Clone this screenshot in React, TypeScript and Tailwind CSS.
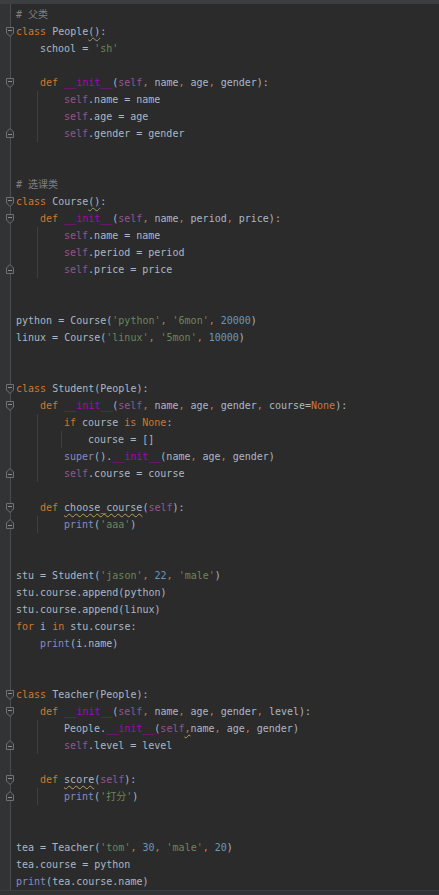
import React from "react";

const LINES: string[] = [
  "# 父类",
  "class People():",
  "    school = 'sh'",
  "",
  "    def __init__(self, name, age, gender):",
  "        self.name = name",
  "        self.age = age",
  "        self.gender = gender",
  "",
  "",
  "# 选课类",
  "class Course():",
  "    def __init__(self, name, period, price):",
  "        self.name = name",
  "        self.period = period",
  "        self.price = price",
  "",
  "",
  "python = Course('python', '6mon', 20000)",
  "linux = Course('linux', '5mon', 10000)",
  "",
  "",
  "class Student(People):",
  "    def __init__(self, name, age, gender, course=None):",
  "        if course is None:",
  "            course = []",
  "        super().__init__(name, age, gender)",
  "        self.course = course",
  "",
  "    def choose_course(self):",
  "        print('aaa')",
  "",
  "",
  "stu = Student('jason', 22, 'male')",
  "stu.course.append(python)",
  "stu.course.append(linux)",
  "for i in stu.course:",
  "    print(i.name)",
  "",
  "",
  "class Teacher(People):",
  "    def __init__(self, name, age, gender, level):",
  "        People.__init__(self,name, age, gender)",
  "        self.level = level",
  "",
  "    def score(self):",
  "        print('打分')",
  "",
  "",
  "tea = Teacher('tom', 30, 'male', 20)",
  "tea.course = python",
  "print(tea.course.name)",
];

// 1-based line numbers
const FOLD_START = new Set([2, 5, 12, 13, 23, 24, 30, 41, 42, 46]);
const FOLD_END = new Set([8, 16, 28, 31, 44, 47]);
const GUIDES: Record<number, number[]> = {
  6: [0], 7: [0], 8: [0],
  14: [0], 15: [0], 16: [0],
  25: [0], 26: [0, 1], 27: [0], 28: [0],
  31: [0],
  43: [0], 44: [0],
  47: [0],
};
// wavy decorations: line -> [from, to, color] (column indices within the trimmed text)
const WAVY: Record<number, [number, number, string][]> = {
  2: [[12, 14, "#9a9a7a"]],
  12: [[12, 14, "#9a9a7a"]],
  30: [[4, 17, "#b9a35a"]],
  43: [[20, 21, "#b9a35a"]],
  46: [[4, 9, "#b9a35a"]],
};

const C = {
  def: "#a9b7c6",
  kw: "#cc7832",
  str: "#6a8759",
  num: "#6897bb",
  self: "#94558d",
  magic: "#b200b2",
  builtin: "#8888c6",
  comment: "#808080",
};
const KW = new Set(["class", "def", "if", "is", "None", "for", "in"]);

function colorize(text: string): string[] {
  const colors: string[] = new Array(text.length).fill(C.def);
  const re = /(#.*$)|('[^']*')|(\b\d+\b)|([A-Za-z_][A-Za-z0-9_]*)|(,)/g;
  let m: RegExpExecArray | null;
  while ((m = re.exec(text))) {
    let col = C.def;
    if (m[1]) col = C.comment;
    else if (m[2]) col = C.str;
    else if (m[3]) col = C.num;
    else if (m[4]) {
      const w = m[4];
      if (KW.has(w)) col = C.kw;
      else if (w === "self") col = C.self;
      else if (w === "__init__") col = C.magic;
      else if (w === "print" || w === "super") col = C.builtin;
    } else if (m[5]) col = C.kw;
    for (let i = m.index; i < m.index + m[0].length; i++) colors[i] = col;
  }
  return colors;
}

function renderText(text: string, lineNo: number) {
  const colors = colorize(text);
  const wavy: (string | null)[] = new Array(text.length).fill(null);
  (WAVY[lineNo] || []).forEach(([a, b, c]) => {
    for (let i = a; i < b && i < text.length; i++) wavy[i] = c;
  });
  const chars = Array.from(text);
  const out: React.ReactNode[] = [];
  let i = 0;
  let k = 0;
  while (i < chars.length) {
    let j = i + 1;
    while (j < chars.length && colors[j] === colors[i] && wavy[j] === wavy[i]) j++;
    const seg = chars.slice(i, j).join("");
    const w = wavy[i];
    out.push(
      <span
        key={k++}
        style={{
          color: colors[i],
          ...(w
            ? {
                textDecorationLine: "underline",
                textDecorationStyle: "wavy",
                textDecorationColor: w,
                textDecorationThickness: "1px",
                textUnderlineOffset: "2px",
              }
            : {}),
        }}
      >
        {seg}
      </span>
    );
    i = j;
  }
  return out;
}

function FoldStart() {
  return (
    <svg width="8" height="10" viewBox="0 0 8 10" className="block">
      <path d="M0.5 0.5 H7.5 V6 L4 9.5 L0.5 6 Z" fill="#313335" stroke="#6e7072" strokeWidth="1" />
      <path d="M2 3.5 H6" stroke="#8a8c8e" strokeWidth="1" />
    </svg>
  );
}
function FoldEnd() {
  return (
    <svg width="8" height="10" viewBox="0 0 8 10" className="block">
      <path d="M0.5 9.5 H7.5 V4 L4 0.5 L0.5 4 Z" fill="#313335" stroke="#6e7072" strokeWidth="1" />
      <path d="M2 6.5 H6" stroke="#8a8c8e" strokeWidth="1" />
    </svg>
  );
}

function Line({ text, n }: { text: string; n: number }) {
  const lead = text.match(/^ */)![0].length;
  const levels = Math.floor(lead / 4);
  const rest = text.slice(levels * 4);
  const guides = GUIDES[n] || [];
  return (
    <div className="flex h-[17px] items-stretch">
      <div className="relative w-[11px] shrink-0 border-r border-[#4a4c4e] bg-[#313335]">
        {FOLD_START.has(n) && (
          <div className="absolute left-[6px] top-[4px]">
            <FoldStart />
          </div>
        )}
        {FOLD_END.has(n) && (
          <div className="absolute left-[6px] top-[3px]">
            <FoldEnd />
          </div>
        )}
      </div>
      <div className="flex h-[17px] items-center pl-[5px] whitespace-pre leading-[17px]">
        {Array.from({ length: levels }).map((_, i) => (
          <span key={i} className="relative inline-block h-[17px] w-[24px] shrink-0">
            {guides.includes(i) && (
              <span className="absolute right-[2px] top-0 bottom-0 w-px bg-[#3d3f41]" />
            )}
          </span>
        ))}
        <span>{renderText(rest, n)}</span>
      </div>
    </div>
  );
}

export default function App() {
  return (
    <div
      className="flex h-[895px] w-[439px] flex-col overflow-hidden bg-[#2b2b2b] text-[10px]"
      style={{ fontFamily: '"DejaVu Sans Mono", "Noto Sans CJK SC", monospace' }}
    >
      <div className="h-[4px] shrink-0 bg-[#3c3f41]" />
      <div className="flex h-[2px] shrink-0">
        <div className="w-[11px] border-r border-[#4a4c4e] bg-[#313335]" />
      </div>
      <div className="flex flex-col">
        {LINES.map((t, i) => (
          <Line key={i} text={t} n={i + 1} />
        ))}
      </div>
      <div className="flex flex-1">
        <div className="w-[11px] border-r border-[#4a4c4e] bg-[#313335]" />
      </div>
      <div className="h-[6px] shrink-0 border-t border-[#3a3c3e] bg-[#313335]" />
    </div>
  );
}
